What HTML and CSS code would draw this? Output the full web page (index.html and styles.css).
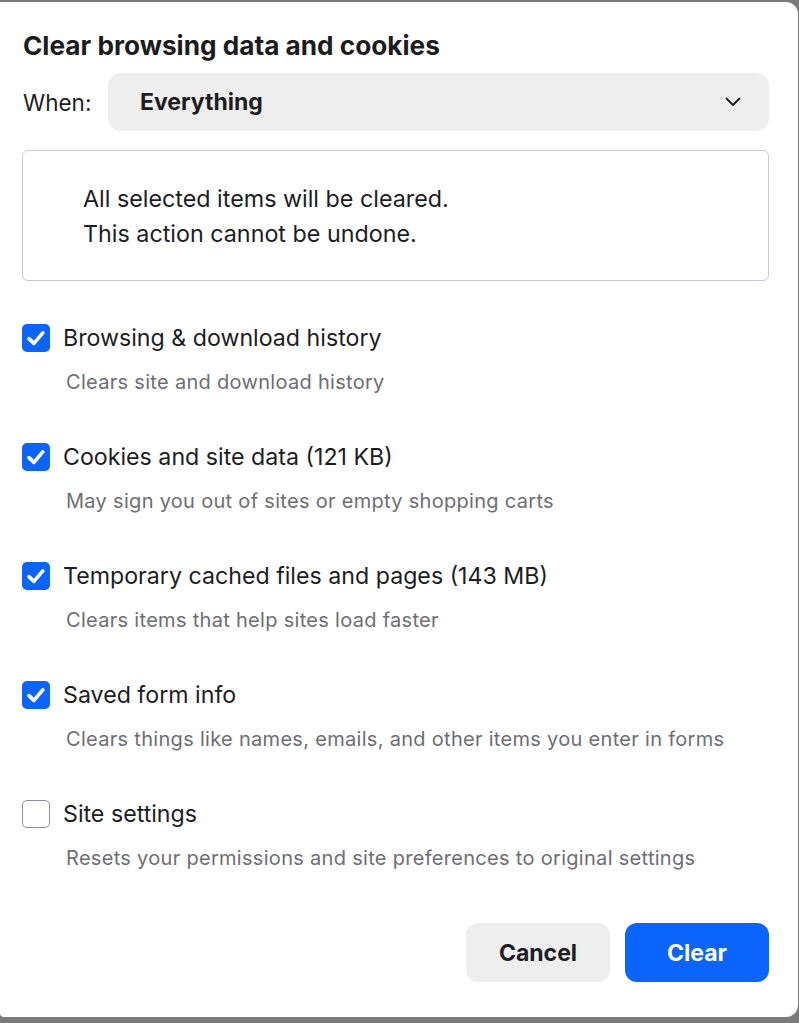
FILE: index.html
```html
<!DOCTYPE html>
<html lang="en">
<head>
<meta charset="utf-8">
<title>Clear browsing data and cookies</title>
<link rel="stylesheet" href="styles.css">
</head>
<body>
<div class="dialog">
  <h1 class="title">Clear browsing data and cookies</h1>
  <div class="when">
    <span class="when-label">When:</span>
    <div class="select">
      <span class="select-value">Everything</span>
      <svg class="chevron" width="16" height="10" viewBox="0 0 16 10"><path d="M1.5 1.5 L8 8 L14.5 1.5" fill="none" stroke="#1d1d1f" stroke-width="1.8" stroke-linecap="round" stroke-linejoin="round"/></svg>
    </div>
  </div>
  <div class="info">
    <p>All selected items will be cleared.</p>
    <p>This action cannot be undone.</p>
  </div>
  <div class="items">
    <div class="item">
      <div class="item-head">
        <span class="box checked"><svg width="28" height="28" viewBox="0 0 28 28"><path d="M7 14.6 L11.9 19.4 L20.8 8.8" fill="none" stroke="#fff" stroke-width="3.6" stroke-linecap="round" stroke-linejoin="round"/></svg></span>
        <span class="label">Browsing &amp; download history</span>
      </div>
      <div class="desc">Clears site and download history</div>
    </div>
    <div class="item">
      <div class="item-head">
        <span class="box checked"><svg width="28" height="28" viewBox="0 0 28 28"><path d="M7 14.6 L11.9 19.4 L20.8 8.8" fill="none" stroke="#fff" stroke-width="3.6" stroke-linecap="round" stroke-linejoin="round"/></svg></span>
        <span class="label">Cookies and site data (121 KB)</span>
      </div>
      <div class="desc">May sign you out of sites or empty shopping carts</div>
    </div>
    <div class="item">
      <div class="item-head">
        <span class="box checked"><svg width="28" height="28" viewBox="0 0 28 28"><path d="M7 14.6 L11.9 19.4 L20.8 8.8" fill="none" stroke="#fff" stroke-width="3.6" stroke-linecap="round" stroke-linejoin="round"/></svg></span>
        <span class="label">Temporary cached files and pages (143 MB)</span>
      </div>
      <div class="desc">Clears items that help sites load faster</div>
    </div>
    <div class="item">
      <div class="item-head">
        <span class="box checked"><svg width="28" height="28" viewBox="0 0 28 28"><path d="M7 14.6 L11.9 19.4 L20.8 8.8" fill="none" stroke="#fff" stroke-width="3.6" stroke-linecap="round" stroke-linejoin="round"/></svg></span>
        <span class="label">Saved form info</span>
      </div>
      <div class="desc">Clears things like names, emails, and other items you enter in forms</div>
    </div>
    <div class="item">
      <div class="item-head">
        <span class="box"></span>
        <span class="label">Site settings</span>
      </div>
      <div class="desc">Resets your permissions and site preferences to original settings</div>
    </div>
  </div>
  <div class="actions">
    <button class="btn btn-cancel">Cancel</button>
    <button class="btn btn-clear">Clear</button>
  </div>
</div>
</body>
</html>
```
FILE: styles.css
```css
html, body {
  margin: 0;
  padding: 0;
}
body {
  background: #7b7b7b;
  font-family: Inter, "Noto Sans", "Liberation Sans", sans-serif;
  color: #1d1d1f;
  height: 1023px;
  overflow: hidden;
}
.dialog {
  box-sizing: border-box;
  margin-top: 2px;
  width: 798px;
  height: 1015px;
  background: #fff;
  border-radius: 0 12px 12px 4px;
  padding: 29px 29px 0 22px;
  display: flex;
  flex-direction: column;
}
.title {
  margin: 0;
  font-size: 26.2px;
  font-weight: 700;
  line-height: 30px;
  color: #1c1c1e;
  padding-left: 1px;
}
.when {
  margin-top: 12px;
  display: flex;
  align-items: center;
}
.when-label {
  font-size: 22.5px;
  width: 85px;
  padding-left: 1px;
}
.select {
  flex: 1;
  height: 58px;
  background: #eeeeee;
  border-radius: 13px;
  display: flex;
  align-items: center;
  justify-content: space-between;
  padding: 0 28px 0 32px;
}
.select-value {
  font-size: 23px;
  font-weight: 700;
}
.info {
  margin-top: 19px;
  box-sizing: border-box;
  height: 131px;
  border: 1px solid #c9c9d3;
  border-radius: 6px;
  padding-left: 60px;
  display: flex;
  flex-direction: column;
  justify-content: center;
}
.info p {
  margin: 0;
  font-size: 23.3px;
  line-height: 35px;
}
.items {
  margin-top: 42px;
  display: flex;
  flex-direction: column;
  gap: 45px;
}
.item-head {
  display: flex;
  align-items: center;
  height: 30px;
}
.box {
  box-sizing: border-box;
  width: 28px;
  height: 28px;
  border-radius: 5px;
  border: 1.5px solid #8f8fa1;
  background: #fff;
  margin-right: 13px;
  display: flex;
}
.box.checked {
  background: #0b64fb;
  border: none;
}
.label {
  font-size: 23.2px;
}
.desc {
  margin-top: 14px;
  line-height: 30px;
  font-size: 20px;
  letter-spacing: 0.3px;
  color: #6e6e73;
  padding-left: 44px;
}
.actions {
  margin-top: 50px;
  display: flex;
  justify-content: flex-end;
  gap: 15px;
}
.btn {
  width: 144px;
  height: 59px;
  border: none;
  border-radius: 12px;
  font-family: inherit;
  font-size: 23px;
  font-weight: 700;
}
.btn-cancel {
  background: #eeeeee;
  color: #1d1d1f;
}
.btn-clear {
  background: #0b64fb;
  color: #fff;
}
```
